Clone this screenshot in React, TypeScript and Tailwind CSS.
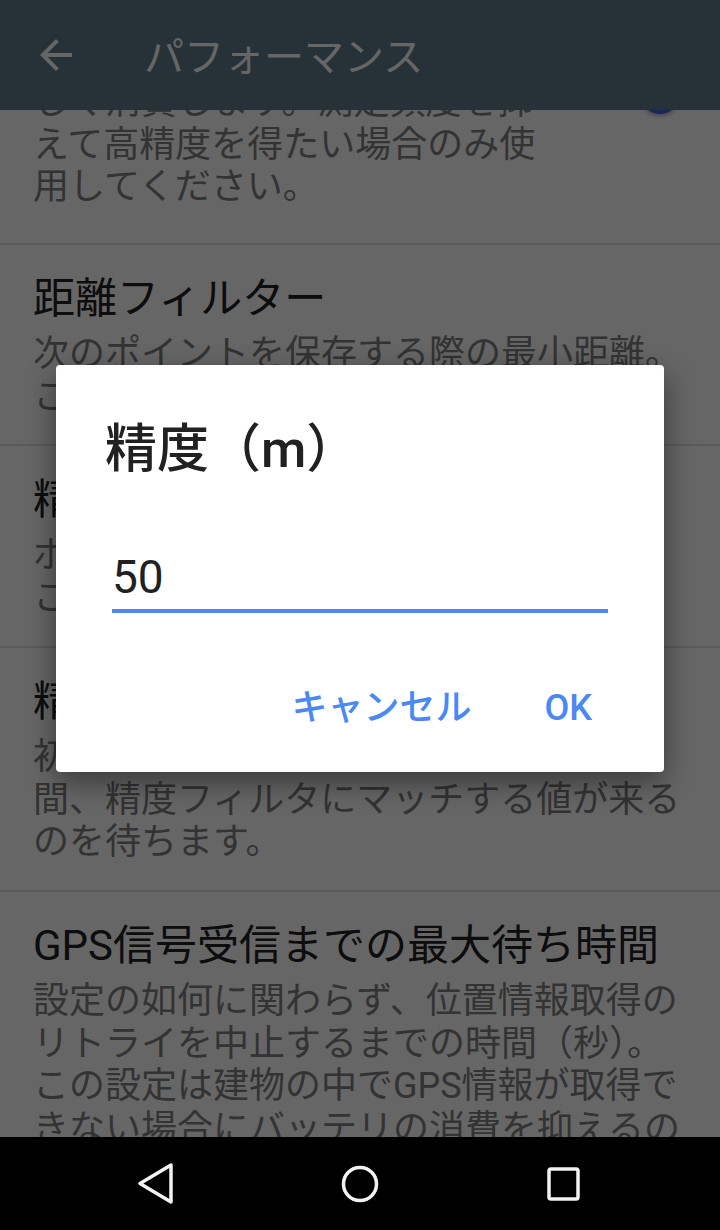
import React from "react";

const FONT = "font-['Roboto','Noto_Sans_CJK_JP',sans-serif]";

function Lines({ lines }: { lines: string[] }) {
  return (
    <>
      {lines.map((l, i) => (
        <React.Fragment key={i}>
          {l}
          {i < lines.length - 1 && <br />}
        </React.Fragment>
      ))}
    </>
  );
}

function Pref({ title, lines }: { title: string; lines: string[] }) {
  return (
    <div className="border-b-2 border-[#e0e0e0] px-[33px] pt-[30px] pb-[26px]">
      <div className="text-[42px] leading-[48px] text-[#212121] whitespace-nowrap">{title}</div>
      <div className="mt-[10px] text-[36px] leading-[42.7px] text-[#808080] whitespace-nowrap">
        <Lines lines={lines} />
      </div>
    </div>
  );
}

export default function App() {
  return (
    <div className={`relative w-[720px] h-[1230px] overflow-hidden flex flex-col bg-white ${FONT}`}>
      {/* App bar */}
      <header className="h-[110px] shrink-0 bg-[#607d8b] flex items-center pl-[32px] relative z-10">
        <div className="w-[48px] h-[48px] flex items-center justify-center">
          <svg width="48" height="48" viewBox="0 0 24 24" fill="#ffffff">
            <path d="M20 11H7.83l5.59-5.59L12 4l-8 8 8 8 1.41-1.41L7.83 13H20v-2z" />
          </svg>
        </div>
        <div className="ml-[64px] pt-[5px] text-[40px] leading-[48px] text-white">パフォーマンス</div>
      </header>

      {/* Scrolled list */}
      <main className="flex-1 overflow-hidden">
        <div className="mt-[-159.8px]">
          <div className="border-b-2 border-[#e0e0e0] pl-[33px] pr-[41px] pt-[30px] pb-[34px] flex items-center">
            <div className="w-[520px]">
              <div className="text-[42px] leading-[48px] text-[#212121] whitespace-nowrap">GPSを常にオン</div>
              <div className="mt-[10px] text-[36px] leading-[42.7px] text-[#808080] whitespace-nowrap">
                <Lines
                  lines={[
                    "常にGPSを使い電池を著",
                    "しく消費します。測定頻度を抑",
                    "えて高精度を得たい場合のみ使",
                    "用してください。",
                  ]}
                />
              </div>
            </div>
            <div className="ml-auto relative w-[76px] h-[40px] flex items-center">
              <div className="absolute left-[6px] right-[6px] h-[26px] rounded-full bg-[#9fa8f8]" />
              <div className="absolute right-0 w-[38px] h-[38px] rounded-full bg-[#3d5afe] shadow-[0_2px_4px_rgba(0,0,0,0.35)]" />
            </div>
          </div>
          <Pref
            title="距離フィルター"
            lines={["次のポイントを保存する際の最小距離。", "この値を0にすると無効になります。"]}
          />
          <Pref
            title="精度フィルター"
            lines={["ポイントの記録に必要な最低限の精度。", "この値より悪い値は記録しません。"]}
          />
          <Pref
            title="精度が一致するまでの時間"
            lines={[
              "初期の位置情報の取得後にこの値の時",
              "間、精度フィルタにマッチする値が来る",
              "のを待ちます。",
            ]}
          />
          <Pref
            title="GPS信号受信までの最大待ち時間"
            lines={[
              "設定の如何に関わらず、位置情報取得の",
              "リトライを中止するまでの時間（秒）。",
              "この設定は建物の中でGPS情報が取得で",
              "きない場合にバッテリの消費を抑えるの",
              "に役立ちます。",
            ]}
          />
        </div>
      </main>

      {/* Navigation bar */}
      <nav className="h-[93px] shrink-0 bg-black flex items-center justify-center gap-[104px] relative z-30">
        <div className="w-[100px] flex justify-center">
          <svg width="40" height="44" viewBox="0 0 40 44" fill="none" stroke="#f2f2f2" strokeWidth="3.5" strokeLinejoin="round">
            <path d="M35 3 L35 40 L4 21.5 Z" />
          </svg>
        </div>
        <div className="w-[100px] flex justify-center">
          <svg width="40" height="40" viewBox="0 0 40 40" fill="none" stroke="#f2f2f2" strokeWidth="3.5">
            <circle cx="20" cy="20" r="16.5" />
          </svg>
        </div>
        <div className="w-[100px] flex justify-center">
          <svg width="36" height="36" viewBox="0 0 36 36" fill="none" stroke="#f2f2f2" strokeWidth="3.5">
            <rect x="3" y="3" width="29" height="30" rx="2" />
          </svg>
        </div>
      </nav>

      {/* Scrim + dialog */}
      <div className="absolute left-0 right-0 top-0 bottom-[93px] z-20 bg-black/60 flex items-center justify-center">
        <div className="w-[608px] rounded-[4px] bg-white shadow-[0_10px_30px_rgba(0,0,0,0.45)]">
          <div className="pt-[54px] pl-[49px] text-[52px] leading-[62px] font-medium text-[#212121]">精度（m）</div>
          <div className="mx-[56px] mt-[68px]">
            <div className="text-[46px] leading-[56px] text-[#212121]">50</div>
            <div className="mt-[4px] h-[4px] bg-[#4a89f3]" />
          </div>
          <div className="mt-[59px] h-[72px] flex items-center justify-end gap-[73px] pr-[72px] text-[36px] leading-[72px] font-medium text-[#4a89f3]">
            <span>キャンセル</span>
            <span>OK</span>
          </div>
          <div className="h-[28px]" />
        </div>
      </div>
    </div>
  );
}
